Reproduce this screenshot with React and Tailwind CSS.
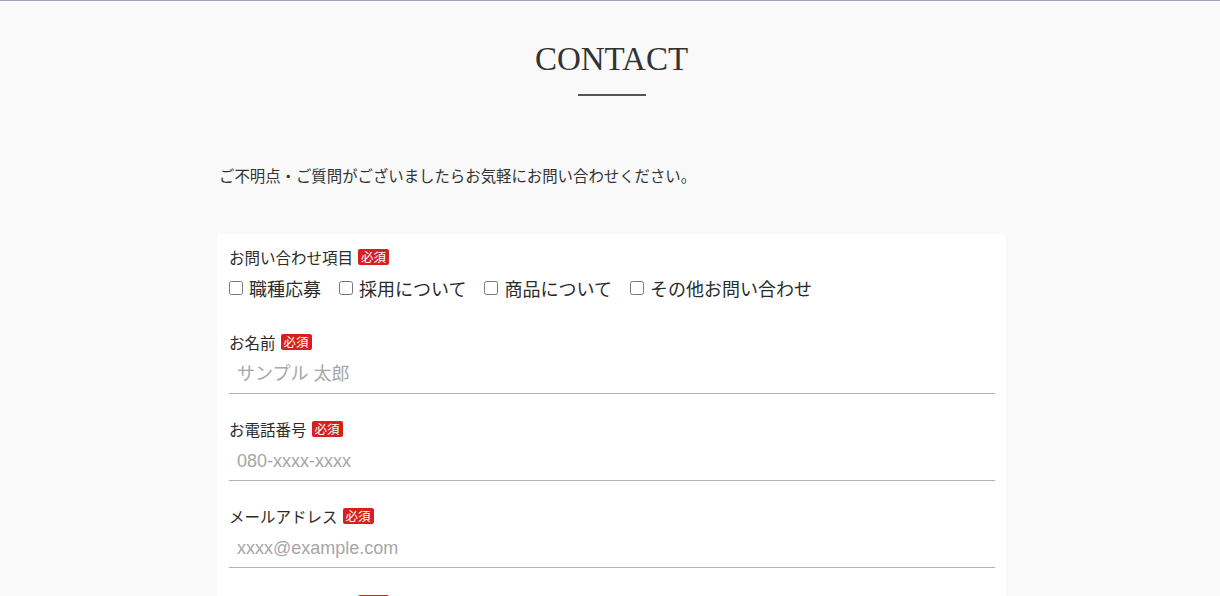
import React from 'react'

const jp = { fontFamily: '"Noto Sans CJK JP", "Noto Sans", sans-serif' }

function Badge() {
  return (
    <span className="ml-[5px] inline-flex h-[16px] w-[31px] items-center justify-center rounded-[2px] bg-[#d71f1f] text-[12.5px] leading-none text-white" style={jp}>
      必須
    </span>
  )
}

function Label({ children }) {
  return (
    <div className="flex h-[22px] items-center text-[15.5px] leading-[22px] text-[#2b2b2b]" style={jp}>
      <span>{children}</span>
      <Badge />
    </div>
  )
}

function Field({ label, placeholder, type = 'text' }) {
  return (
    <div className="mb-[24px]">
      <Label>{label}</Label>
      <input
        type={type}
        placeholder={placeholder}
        className="mt-[2px] block h-[39px] w-full border-b border-[#b4b4b4] bg-transparent px-[8px] text-[18px] text-[#333] outline-none placeholder:text-[#a6a6a6]"
        style={{ fontFamily: '"Liberation Sans", "Noto Sans CJK JP", Arial, sans-serif' }}
      />
    </div>
  )
}

const kinds = ['職種応募', '採用について', '商品について', 'その他お問い合わせ']

export default function App() {
  return (
    <div className="min-h-screen border-t border-[#9ba6b9] bg-[#f9f9f9] pl-[3px]">
      <div className="pt-[42px] text-center">
        <h1 className="text-[33px] leading-[33px] text-[#333]" style={{ fontFamily: '"Liberation Serif", "Times New Roman", serif' }}>
          CONTACT
        </h1>
        <div className="mx-auto mt-[18px] h-[2px] w-[68px] bg-[#555]" />
      </div>

      <div className="mx-auto w-[789px]">
        <p className="mt-[67px] pl-[2px] text-[15.4px] leading-[24px] text-[#333]" style={jp}>
          ご不明点・ご質問がございましたらお気軽にお問い合わせください。
        </p>

        <form className="mt-[47px] rounded-[4px] bg-white px-[11px] pb-[40px] pl-[12px] pt-[12px]" onSubmit={e => e.preventDefault()}>
          <div className="mb-[29px]">
            <Label>お問い合わせ項目</Label>
            <div className="mt-[6px] flex h-[28px] items-center" style={jp}>
              {kinds.map(k => (
                <label key={k} className="mr-[18px] flex items-center gap-[6px] text-[18px] leading-[28px] text-[#2b2b2b]">
                  <input type="checkbox" className="h-[14px] w-[14px]" />
                  <span>{k}</span>
                </label>
              ))}
            </div>
          </div>

          <Field label="お名前" placeholder="サンプル 太郎" />
          <Field label="お電話番号" placeholder="080-xxxx-xxxx" type="tel" />
          <Field label="メールアドレス" placeholder="xxxx@example.com" type="email" />

          <div>
            <Label>お問い合わせ内容</Label>
            <textarea rows={6} className="mt-[6px] block w-full resize-none border border-[#b4b4b4] p-[8px] text-[16px] outline-none" />
          </div>
        </form>
      </div>
    </div>
  )
}
